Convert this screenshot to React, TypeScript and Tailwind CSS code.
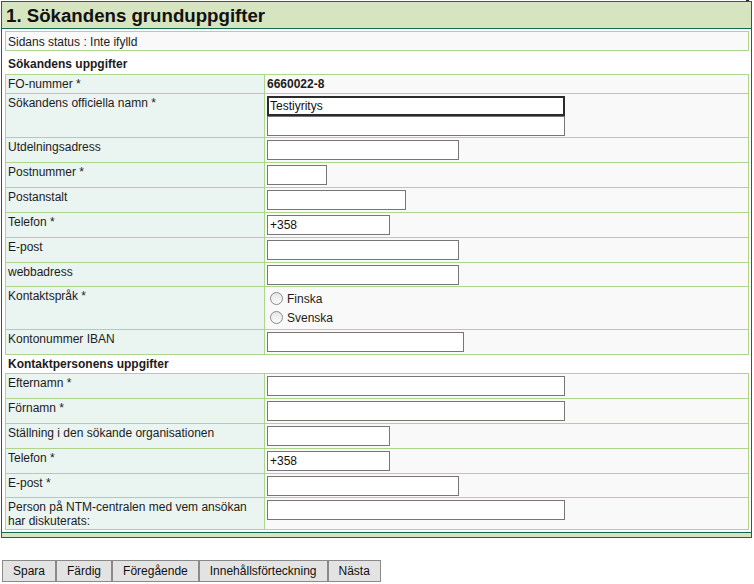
import React from 'react';

type Row =
  | { label: string; kind: 'text'; value: string }
  | { label: string; kind: 'input'; width: string; value?: string; tight?: boolean }
  | { label: string; kind: 'double' }
  | { label: string; kind: 'radio'; options: string[] };

const applicantRows: Row[] = [
  { label: 'FO-nummer *', kind: 'text', value: '6660022-8' },
  { label: 'Sökandens officiella namn *', kind: 'double' },
  { label: 'Utdelningsadress', kind: 'input', width: 'w-[192px]' },
  { label: 'Postnummer *', kind: 'input', width: 'w-[60px]' },
  { label: 'Postanstalt', kind: 'input', width: 'w-[139px]' },
  { label: 'Telefon *', kind: 'input', width: 'w-[123px]', value: '+358' },
  { label: 'E-post', kind: 'input', width: 'w-[192px]' },
  { label: 'webbadress', kind: 'input', width: 'w-[192px]', tight: true },
  { label: 'Kontaktspråk *', kind: 'radio', options: ['Finska', 'Svenska'] },
  { label: 'Kontonummer IBAN', kind: 'input', width: 'w-[197px]' },
];

const contactRows: Row[] = [
  { label: 'Efternamn *', kind: 'input', width: 'w-[298px]' },
  { label: 'Förnamn *', kind: 'input', width: 'w-[298px]' },
  { label: 'Ställning i den sökande organisationen', kind: 'input', width: 'w-[123px]' },
  { label: 'Telefon *', kind: 'input', width: 'w-[123px]', value: '+358' },
  { label: 'E-post *', kind: 'input', width: 'w-[192px]', tight: true },
  { label: 'Person på NTM-centralen med vem ansökan har diskuterats:', kind: 'input', width: 'w-[298px]' },
];

const buttons = ['Spara', 'Färdig', 'Föregående', 'Innehållsförteckning', 'Nästa'];

function TextInput({ width, value, focused }: { width: string; value?: string; focused?: boolean }) {
  return (
    <input
      type="text"
      defaultValue={value}
      className={
        focused
          ? `${width} block h-[20px] border-2 border-[#2b2b2b] bg-white px-px text-[12px] text-[#111] outline-none`
          : `${width} block h-[20px] border border-[#767676] bg-white px-[2px] text-[12px] text-[#111] outline-none`
      }
    />
  );
}

function FormRow({ row }: { row: Row }) {
  return (
    <div className="flex border-b border-[#add58c]">
      <div className="w-[259px] shrink-0 border-r border-[#add58c] bg-[#eaf4f1] px-[2px] pt-[2px] pb-px">
        {row.label}
      </div>
      {row.kind === 'text' && (
        <div className="flex-1 bg-[#f9f9f9] px-[2px] py-[2px] font-bold">{row.value}</div>
      )}
      {row.kind === 'input' && (
        <div className={row.tight ? 'flex-1 bg-[#f9f9f9] px-[2px] pt-[2px] pb-px' : 'flex-1 bg-[#f9f9f9] px-[2px] py-[2px]'}>
          <TextInput width={row.width} value={row.value} />
        </div>
      )}
      {row.kind === 'double' && (
        <div className="flex-1 bg-[#f9f9f9] px-[2px] pt-[2px] pb-px">
          <TextInput width="w-[298px]" value="Testiyritys" focused />
          <TextInput width="w-[298px]" />
        </div>
      )}
      {row.kind === 'radio' && (
        <div className="flex-1 bg-[#f9f9f9] px-[2px] pt-[2px] pb-[2px]">
          {row.options.map((opt) => (
            <label key={opt} className="flex h-[19px] items-center gap-[4px]">
              <span className="ml-[3px] h-[13px] w-[13px] rounded-full border border-[#8a8a8a] bg-gradient-to-b from-[#e6e6e6] to-[#fbfbfb]" />
              {opt}
            </label>
          ))}
        </div>
      )}
    </div>
  );
}

function FormTable({ rows }: { rows: Row[] }) {
  return (
    <div className="border-x border-t border-[#add58c]">
      {rows.map((row) => (
        <FormRow key={row.label} row={row} />
      ))}
    </div>
  );
}

export default function App() {
  return (
    <div className="min-h-[584px] bg-white pl-px font-['Liberation_Sans',Arial,sans-serif] text-[12px] leading-[14px] text-[#1c1c1c]">
      <div className="flex h-px w-[751px] justify-end">
        <span className="mr-[3px] h-px w-[3px] bg-[#1a2540]" />
      </div>

      <div className="w-[751px] border border-[#0e6b50]">
        {/* Page title */}
        <div className="h-[27px] border-b border-[#0e6b50] bg-[#d6e4bf] pl-[4px] pt-px text-[18.67px] font-bold leading-[25px] text-[#111]">
          1. Sökandens grunduppgifter
        </div>

        <div className="pt-[2px] pr-[2px] pb-[2px] pl-[3px]">
          {/* Status */}
          <div className="border border-[#add58c] bg-[#f9f9f9] px-[2px] pt-[3px] pb-px">
            Sidans status : Inte ifylld
          </div>

          <div className="mt-[5px] pl-[3px] pt-px pb-[3px] font-bold">Sökandens uppgifter</div>
          <FormTable rows={applicantRows} />

          <div className="pl-[3px] pt-[2px] pb-[2px] font-bold">Kontaktpersonens uppgifter</div>
          <FormTable rows={contactRows} />
        </div>

        <div className="h-[5px] border-t border-[#0e6b50] bg-[#d6e4bf]" />
      </div>

      {/* Navigation */}
      <div className="mt-[22px] flex pl-px">
        {buttons.map((b) => (
          <button
            key={b}
            type="button"
            className="h-[22px] border border-[#8a8a8a] bg-[#e3e3e3] px-[10px] text-[12px] text-[#111]"
          >
            {b}
          </button>
        ))}
      </div>
    </div>
  );
}
